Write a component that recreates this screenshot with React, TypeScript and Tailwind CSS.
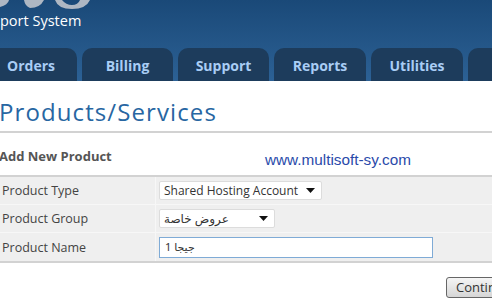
const tabs = [
  { label: "Orders", w: "w-[92px] -ml-[15px]" },
  { label: "Billing", w: "w-[91px]" },
  { label: "Support", w: "w-[91px]" },
  { label: "Reports", w: "w-[92px]" },
  { label: "Utilities", w: "w-[92px]" },
  { label: "", w: "w-[40px]" },
];

function Header() {
  return (
    <div className="h-[81px] overflow-hidden bg-gradient-to-b from-[#1a4978] to-[#2c6195]">
      <div className="relative h-[48px]">
        <svg width="100" height="10" viewBox="0 0 100 10" className="block">
          <path d="M0 0 L9 0 Q8 5 0 7 Z" fill="#aeb7c3" />
          <path d="M24 0 L44 0 Q40 8 30 8 Q25 6 24 0 Z" fill="#aeb7c3" />
          <path d="M55 0 L62 0 Q66 5 72 5 Q78 5 80 0 L90 0 Q86 9 72 9 Q58 9 55 0 Z" fill="#aeb7c3" />
        </svg>
        <div className="mt-[2px] text-[14.5px] leading-[18px] text-white [font-family:'Open_Sans',sans-serif]">
          port System
        </div>
      </div>
      <div className="flex h-[33px] gap-[5px]">
        {tabs.map((t) => (
          <div
            key={t.label + t.w}
            className={`${t.w} flex shrink-0 items-center justify-center rounded-t-[10px] bg-[#1d3c5c] pt-[1px] text-[14px] font-bold text-[#a9cdf5] [font-family:'Open_Sans',sans-serif]`}
          >
            {t.label}
          </div>
        ))}
      </div>
    </div>
  );
}

function Row({ label, children, last }: { label: string; children: React.ReactNode; last?: boolean }) {
  return (
    <div className={`flex h-[28px] items-center ${last ? "" : "border-b border-[#f7f7f7]"}`}>
      <div className="w-[155px] shrink-0 pl-[2px] pt-[2px] text-[12.5px] text-[#444]">{label}</div>
      <div className="flex h-full items-center border-l border-[#f7f7f7] pl-[3px]">{children}</div>
    </div>
  );
}

function Select({ value, w, rtl }: { value: string; w: string; rtl?: boolean }) {
  return (
    <div className={`${w} flex h-[19px] items-center justify-between rounded-[2px] border border-[#dcdcdc] bg-white pl-[4px] pr-[6px]`}>
      <span className={`text-[12px] text-[#333] ${rtl ? "[font-family:'Noto_Sans','DejaVu_Sans',sans-serif] text-[10.5px]" : ""}`}>
        {value}
      </span>
      <svg width="9" height="5" viewBox="0 0 9 5">
        <path d="M0 0 L9 0 L4.5 5 Z" fill="#111" />
      </svg>
    </div>
  );
}

export default function App() {
  return (
    <div className="h-[303px] w-[492px] overflow-hidden bg-white [font-family:'Open_Sans',sans-serif]">
      <Header />
      <div className="pt-[16px]">
        <h1 className="-ml-[1px] text-[24px] leading-[30px] tracking-[1.1px] text-[#2766a2]">Products/Services</h1>
        <div className="mt-[4px] h-[2px] bg-[#d2d2d2]" />
        <div className="flex h-[42px] items-end pb-[9px]">
          <div className="w-[266px] -ml-[1px] text-[13px] font-bold text-[#555]">Add New Product</div>
          <div className="-mb-[3px] text-[15.3px] leading-[18px] text-[#2a4aaa] [font-family:'Liberation_Sans',Arial,sans-serif]">
            www.multisoft-sy.com
          </div>
        </div>
        <div className="border-y-2 border-[#d2d2d2] bg-[#efefef]">
          <Row label="Product Type">
            <Select value="Shared Hosting Account" w="w-[163px]" />
          </Row>
          <Row label="Product Group">
            <Select value="عروض خاصة" w="w-[116px]" rtl />
          </Row>
          <Row label="Product Name" last>
            <div className="flex h-[21px] w-[274px] items-center border border-[#7fabd6] bg-white pl-[5px]">
              <span dir="rtl" className="text-[11px] text-[#333] [font-family:'Noto_Sans','DejaVu_Sans',sans-serif]">
                جيجا 1
              </span>
            </div>
          </Row>
        </div>
        <div className="flex justify-end pt-[14px]">
          <button className="-mr-[20px] h-[21px] w-[66px] rounded-[3px] border border-[#666] bg-gradient-to-b from-[#f5f5f5] to-[#d6d6d6] pl-[9px] text-left text-[13px] text-[#333]">
            Continue
          </button>
        </div>
      </div>
    </div>
  );
}
